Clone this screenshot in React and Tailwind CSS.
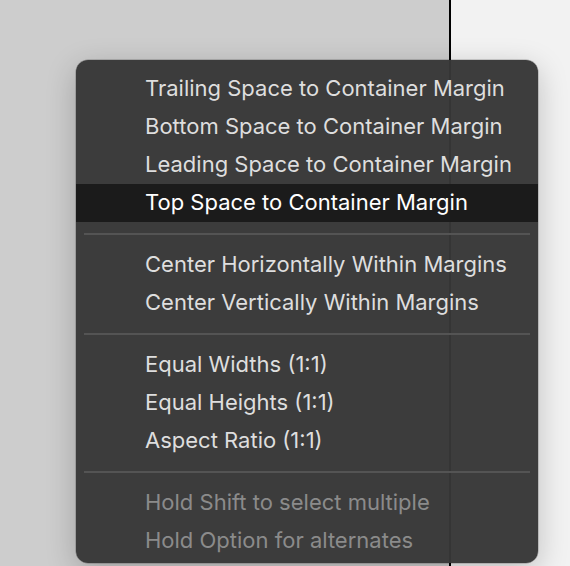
const groups = [
  [
    { label: 'Trailing Space to Container Margin' },
    { label: 'Bottom Space to Container Margin' },
    { label: 'Leading Space to Container Margin' },
    { label: 'Top Space to Container Margin', active: true },
  ],
  [
    { label: 'Center Horizontally Within Margins' },
    { label: 'Center Vertically Within Margins' },
  ],
  [
    { label: 'Equal Widths (1:1)' },
    { label: 'Equal Heights (1:1)' },
    { label: 'Aspect Ratio (1:1)' },
  ],
  [
    { label: 'Hold Shift to select multiple', disabled: true },
    { label: 'Hold Option for alternates', disabled: true },
  ],
];

function MenuItem({ item }) {
  return (
    <div
      className={`
        h-[38px] flex items-center pl-[69px] pr-4 pb-[2px] text-[22px] whitespace-nowrap
        ${item.active ? 'bg-[#1b1b1b] text-white' : ''}
        ${item.disabled ? 'text-[#8b8b8b]' : ''}
        ${!item.active && !item.disabled ? 'text-[#dedede]' : ''}
      `}
    >
      {item.label}
    </div>
  );
}

export default function App() {
  return (
    <div
      className="relative w-[570px] h-[566px] overflow-hidden flex"
      style={{ fontFamily: 'Inter, "Noto Sans", sans-serif' }}
    >
      {/* canvas behind the menu */}
      <div className="w-[449px] bg-[#cdcdcd]" />
      <div className="w-[2px] bg-black" />
      <div className="flex-1 bg-[#f2f2f2]" />

      {/* Context menu */}
      <div className="absolute left-[76px] top-[60px] w-[462px] h-[503px] rounded-[12px] bg-[#373737]/[0.97] pt-[10px] shadow-[0_8px_30px_rgba(0,0,0,0.22),0_0_0_0.5px_rgba(0,0,0,0.3)] antialiased">
        {groups.map((group, gi) => (
          <div key={gi}>
            {gi > 0 && (
              <div className="h-[24px] flex items-center px-2">
                <div className="h-[2px] w-full bg-[#545454]" />
              </div>
            )}
            {group.map((item) => (
              <MenuItem key={item.label} item={item} />
            ))}
          </div>
        ))}
      </div>
    </div>
  );
}
